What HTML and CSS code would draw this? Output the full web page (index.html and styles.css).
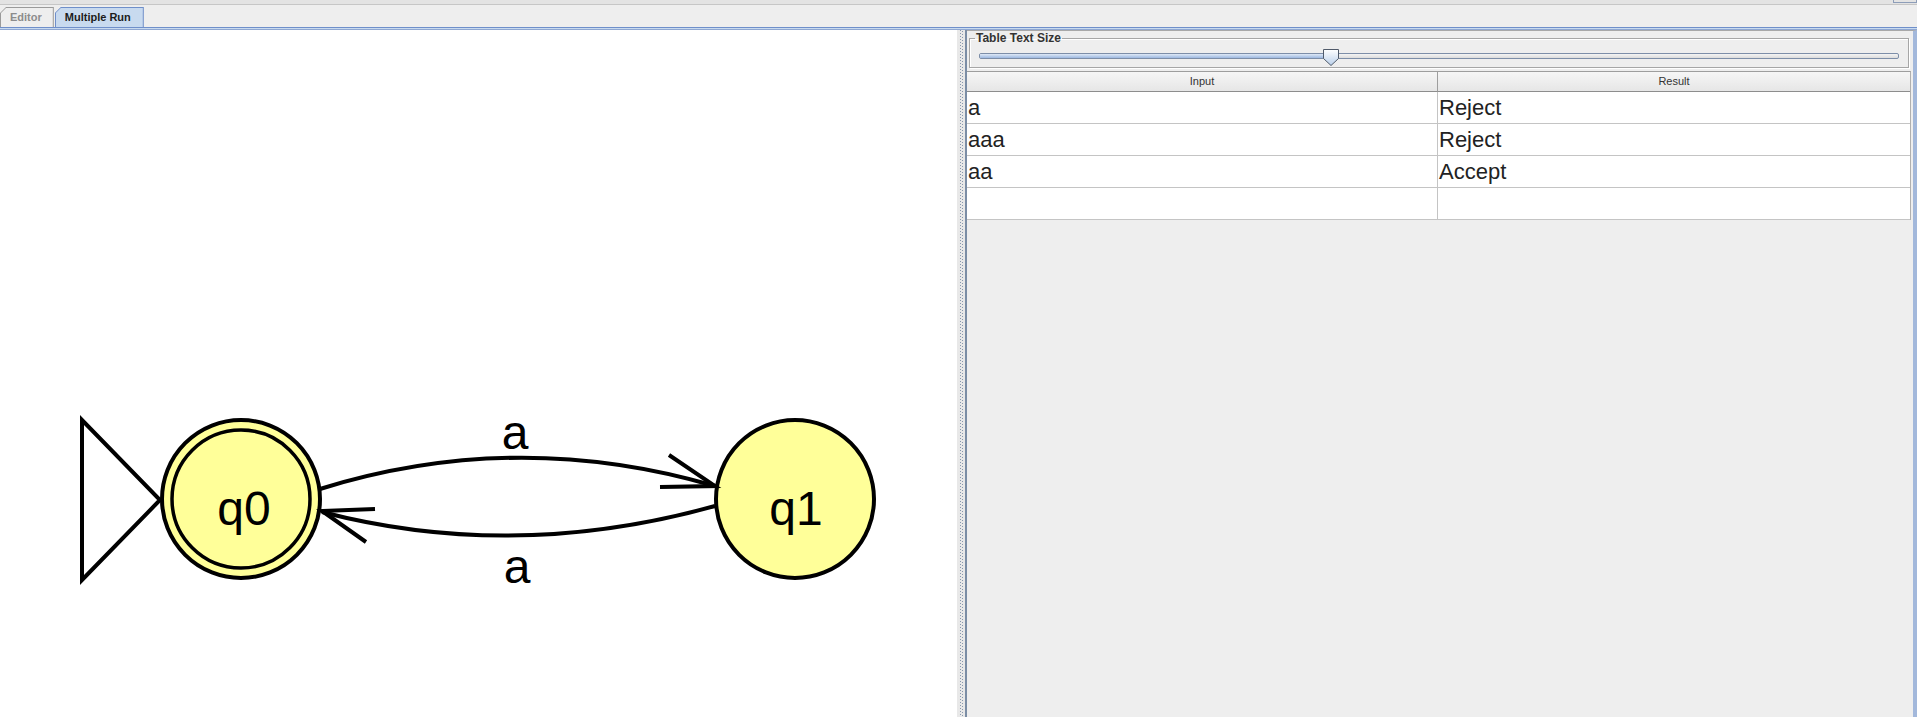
FILE: index.html
```html
<!DOCTYPE html>
<html>
<head>
<meta charset="utf-8">
<link rel="stylesheet" href="styles.css">
</head>
<body>
<div class="window">
  <div class="topstrip"><span class="topbox"></span></div>
  <div class="tabbar">
    <div class="tab"><div class="tab-in">Editor</div></div>
    <div class="tab active"><div class="tab-in">Multiple Run</div></div>
  </div>
  <div class="tabband"></div>
  <div class="main">
    <div class="canvas">
      <svg class="diagram" width="957" height="687" viewBox="0 30 957 687" xmlns="http://www.w3.org/2000/svg">
        <polygon points="82,420 82,580 160,500" fill="none" stroke="#000" stroke-width="4"/>
        <path d="M320,489 Q516,428 715,486" fill="none" stroke="#000" stroke-width="4"/>
        <path d="M715,506 Q514,562 322,512" fill="none" stroke="#000" stroke-width="4"/>
        <circle cx="241" cy="499" r="79" fill="#ffff99" stroke="#000" stroke-width="4"/>
        <circle cx="241" cy="499" r="69" fill="none" stroke="#000" stroke-width="3.5"/>
        <circle cx="795" cy="499" r="79" fill="#ffff99" stroke="#000" stroke-width="4"/>
        <polyline points="669,455 715,486 660,487" fill="none" stroke="#000" stroke-width="4"/>
        <polyline points="375,509 322,511 366,542" fill="none" stroke="#000" stroke-width="4"/>
        <text class="lbl" x="244" y="525" text-anchor="middle">q0</text>
        <text class="lbl" x="796" y="525" text-anchor="middle">q1</text>
        <text class="lbl" x="515" y="449" text-anchor="middle">a</text>
        <text class="lbl" x="517" y="583" text-anchor="middle">a</text>
      </svg>
    </div>
    <div class="divider"></div>
    <div class="right">
      <fieldset class="sizebox">
        <legend>Table Text Size</legend>
        <div class="slider">
          <div class="track"><div class="fill"></div></div>
          <svg class="thumb" width="16" height="17" viewBox="0 0 16 17" xmlns="http://www.w3.org/2000/svg">
            <defs>
              <linearGradient id="tg" x1="0" y1="0" x2="0" y2="1">
                <stop offset="0" stop-color="#ffffff"/>
                <stop offset="1" stop-color="#b9cfea"/>
              </linearGradient>
            </defs>
            <path d="M0.5,0.5 H15.5 V9.5 L8,16.5 L0.5,9.5 Z" fill="url(#tg)" stroke="#505a6a" stroke-width="1"/>
          </svg>
        </div>
      </fieldset>
      <div class="table">
        <div class="th">Input</div><div class="th">Result</div>
        <div class="td">a</div><div class="td">Reject</div>
        <div class="td">aaa</div><div class="td">Reject</div>
        <div class="td">aa</div><div class="td">Accept</div>
        <div class="td"></div><div class="td"></div>
      </div>
    </div>
  </div>
</div>
</body>
</html>
```

FILE: styles.css
```css
html, body {
  margin: 0;
  padding: 0;
}
body {
  width: 1917px;
  height: 717px;
  overflow: hidden;
  font-family: "Liberation Sans", Arial, sans-serif;
  background: #eeeeee;
}
.window {
  display: flex;
  flex-direction: column;
  height: 717px;
}
.topstrip {
  height: 4px;
  background: #e3e3e3;
  border-bottom: 1px solid #c6c6c6;
  display: flex;
  justify-content: flex-end;
}
.topbox {
  width: 22px;
  height: 2px;
  border: 1px solid #8d9db8;
  border-top: none;
}
.tabbar {
  height: 22px;
  background: #eeeeee;
  display: flex;
  align-items: flex-end;
  gap: 1px;
}
.tab {
  height: 20px;
  padding: 1px 1px 0 1px;
  box-sizing: border-box;
  background: #9a9a9a;
  clip-path: polygon(0 6px, 6px 0, 100% 0, 100% 100%, 0 100%);
}
.tab-in {
  height: 19px;
  line-height: 18px;
  font-size: 11px;
  font-weight: bold;
  color: #8c8c8c;
  background: #eeeeee;
  padding: 0 11px 0 9px;
  clip-path: polygon(0 5px, 5px 0, 100% 0, 100% 100%, 0 100%);
}
.tab.active {
  background: #6f8fca;
}
.tab.active .tab-in {
  background: #c8daef;
  color: #1c1c1c;
  padding: 0 12px 0 9px;
}
.tabband {
  height: 1px;
  background: #c8daef;
  border-top: 1px solid #6f8fca;
  border-bottom: 1px solid #8fa7d2;
}
.main {
  flex: 1;
  display: flex;
  min-height: 0;
}
.canvas {
  width: 957px;
  background: #ffffff;
  overflow: hidden;
}
.diagram {
  display: block;
}
.lbl {
  font-family: "Liberation Sans", Arial, sans-serif;
  font-size: 48px;
  fill: #000;
}
.divider {
  width: 8px;
  border-right: 2px solid #7b8da5;
  background:
    linear-gradient(#8797ae 0 1px, transparent 1px) 3px 0 / 1px 3px repeat-y,
    linear-gradient(#8797ae 0 1px, transparent 1px) 5px 1px / 1px 3px repeat-y,
    #e8e8e8;
}
.right {
  flex: 1;
  display: flex;
  flex-direction: column;
  background: #eeeeee;
  border-top: 1px solid #a8a8a8;
  border-right: 4px solid #a3b8db;
  padding-right: 2px;
  min-width: 0;
}
.sizebox {
  margin: 1px 2px 0 2px;
  padding: 0;
  border: 1px solid #a6a6a6;
  box-shadow: inset 1px 1px 0 #ffffff, 1px 1px 0 #ffffff;
  min-width: 0;
}
.sizebox legend {
  font-size: 12px;
  line-height: 12px;
  font-weight: bold;
  color: #333333;
  padding: 0 1px;
  margin-left: 5px;
}
.slider {
  position: relative;
  height: 14px;
  padding-top: 9px;
  margin: 0 9px;
}
.track {
  height: 6px;
  box-sizing: border-box;
  border: 1px solid #7d8ea8;
  border-radius: 2px;
  background: linear-gradient(#f4f4f4, #dcdcdc);
  overflow: hidden;
}
.fill {
  width: 351px;
  height: 100%;
  background: linear-gradient(#dfe9f7, #9db8e0);
}
.thumb {
  position: absolute;
  left: 344px;
  top: 5px;
}
.table {
  margin-top: 3px;
  display: grid;
  grid-template-columns: 471px 1fr;
  background: #ffffff;
  border-top: 1px solid #9e9e9e;
  border-right: 1px solid #b0b0b0;
}
.th {
  height: 19px;
  line-height: 19px;
  font-size: 11px;
  color: #333333;
  text-align: center;
  background: linear-gradient(#f6f6f6, #e6e6e6);
  border-bottom: 1px solid #8d8d8d;
}
.th:first-child {
  border-right: 1px solid #9e9e9e;
}
.td {
  height: 31px;
  line-height: 31px;
  font-size: 22px;
  color: #222222;
  padding-left: 1px;
  border-bottom: 1px solid #c4c4c4;
}
.td:nth-child(odd) {
  border-right: 1px solid #c4c4c4;
}
```
